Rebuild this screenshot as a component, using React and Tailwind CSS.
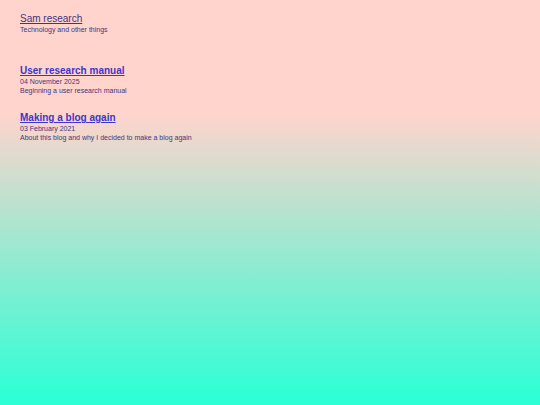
const posts = [
  {
    title: "User research manual",
    date: "04 November 2025",
    iso: "2025-11-04",
    summary: "Beginning a user research manual",
  },
  {
    title: "Making a blog again",
    date: "03 February 2021",
    iso: "2021-02-03",
    summary: "About this blog and why I decided to make a blog again",
  },
];

export default function App() {
  return (
    <div className="min-h-screen bg-linear-to-b/srgb from-[#ffd4cc] from-28% to-[#2effd5] to-98% px-5 pt-[13px] font-['Liberation_Sans',Arial,sans-serif] text-[7px] leading-[9px] text-[#44357f]">
      <header>
        <h1 className="text-[10px] leading-3">
          <a href="#" className="underline">Sam research</a>
        </h1>
        <p>Technology and other things</p>
      </header>
      <main className="mt-[31px] flex flex-col gap-[17px]">
        {posts.map((post) => (
          <article key={post.title}>
            <h2 className="text-[10px] leading-3 font-bold text-[#4035cc]">
              <a href="#" className="underline">{post.title}</a>
            </h2>
            <time dateTime={post.iso} className="block">{post.date}</time>
            <p>{post.summary}</p>
          </article>
        ))}
      </main>
    </div>
  );
}
